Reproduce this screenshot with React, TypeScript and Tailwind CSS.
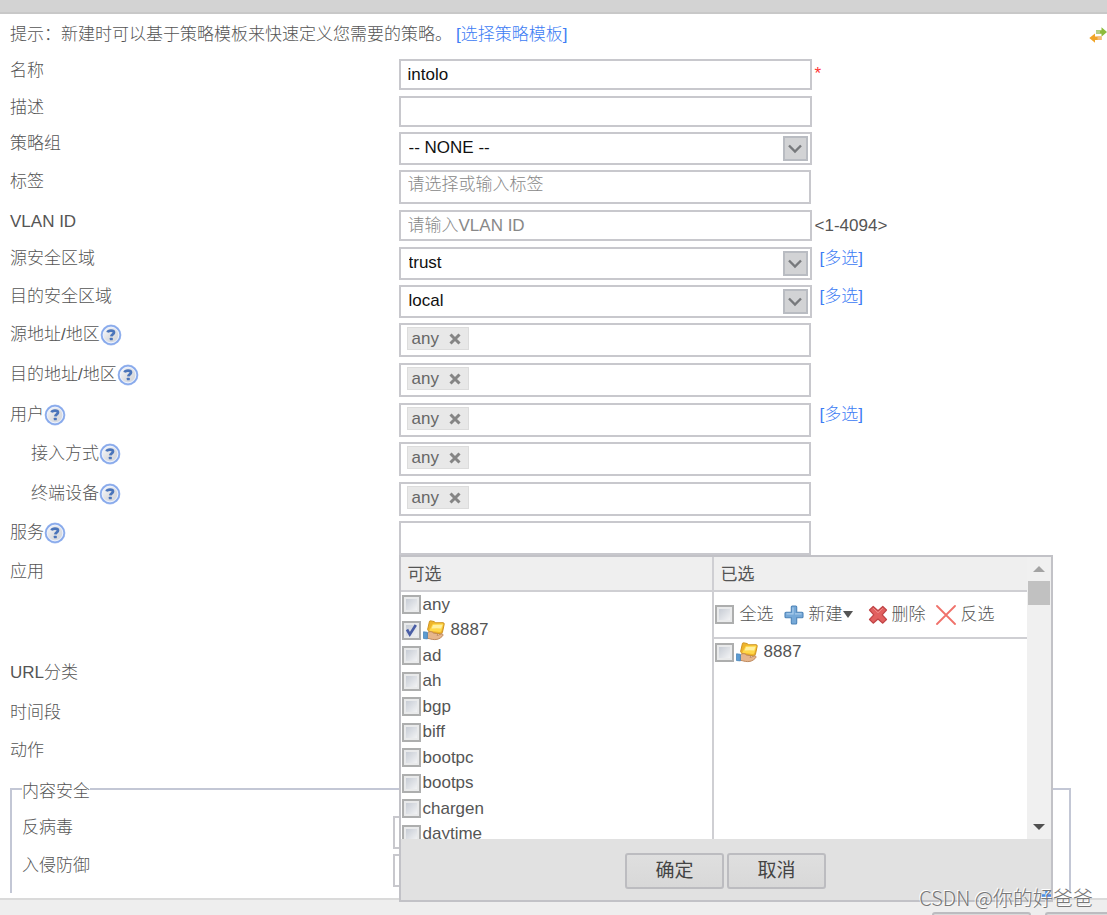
import React, { useId, useState } from "react";

const fieldBox =
  "border-2 border-[#c8c8cd] bg-white text-[17px] leading-6 text-[#111] outline-none placeholder:text-[#888] placeholder:opacity-100";

function HelpIcon() {
  return (
    <svg viewBox="0 0 22 22" className="size-[22px] shrink-0" aria-hidden="true">
      <defs>
        <linearGradient id="helpFill" x1="0" y1="0" x2="1" y2="1">
          <stop offset="0" stopColor="#fbfbfc" />
          <stop offset="0.5" stopColor="#dfe0e3" />
          <stop offset="1" stopColor="#d3d5da" />
        </linearGradient>
      </defs>
      <circle cx="11" cy="11" r="10.4" fill="#a4bff3" />
      <circle cx="11" cy="11" r="9.300" fill="none" stroke="#88a9ea" strokeWidth="1.300" />
      <circle cx="11" cy="11" r="7.800" fill="url(#helpFill)" stroke="#eef3fd" strokeWidth="1" />
      <path
        d="M7.600 8.400C8 7 9.400 6.700 11 6.700c1.900 0 3 .6 3 1.900 0 1.700-2.500 1.700-2.700 3.700"
        fill="none"
        stroke="#4a74ba"
        strokeWidth="2.700"
      />
      <rect x="9.800" y="13.700" width="3" height="2.600" rx="0.600" fill="#4a74ba" />
    </svg>
  );
}

function FolderHandIcon() {
  return (
    <svg viewBox="0 0 22 21" className="h-[21px] w-[22px] shrink-0" aria-hidden="true">
      <path d="M6.500 1.200Q7 .7 8 .9l3.300.7 1.200 1.200 7.500-.1q1.500.2 1.200 1.500L19.500 12q-.4 1.700-2 1.700L7 13 4.600 9.600z" fill="#efb52b" stroke="#cf9422" strokeWidth="1" />
      <path d="M9.300 4.700q.3-1 1.400-1l8.600-.2q1.300.1 1 1.300l-1.900 6q-.5 1.500-1.900 1.300L6.200 10.800z" fill="#ffd84a" />
      <path d="M10 5l9.500-.3-1.400 3.800q-4-.3-9.500 0z" fill="#fff0a0" />
      <path d="M4.500 13c2-2 4.500-1.600 6 0l3 .4c1.500.2 1.500 1.500.4 1.900 2.300-.2 4.200-1.700 5.300-1.400 1.300.3.900 1.700 0 2.500-2 2-4.400 3.200-7.400 3.200-3.200 0-4.900-1-7.300-1.200z" fill="#e6b68c" stroke="#b88155" strokeWidth="0.900" />
      <path d="M.5 11.800l3.900.5v6.600l-3.900-.4z" fill="#5b9bd2" stroke="#4a86bb" strokeWidth="0.800" />
    </svg>
  );
}

function PlusIcon() {
  return (
    <svg viewBox="0 0 20 20" className="size-5 shrink-0" aria-hidden="true">
      <path
        d="M8.300 1h3.400q1 0 1 1v5.300H18q1 0 1 1v3.400q0 1-1 1h-5.300V18q0 1-1 1H8.300q-1 0-1-1v-5.300H2q-1 0-1-1V8.300q0-1 1-1h5.300V2q0-1 1-1z"
        fill="#76a9d8"
        stroke="#4d84b8"
        strokeWidth="1.100"
      />
      <path d="M9 2.500v6.300H2.500M11 8.800h6.500" fill="none" stroke="#a9cbea" strokeWidth="1.200" />
    </svg>
  );
}

function DeleteIcon() {
  return (
    <svg viewBox="0 0 20 20" className="size-5 shrink-0" aria-hidden="true">
      <path
        d="M5.200 1.500L10 5.800l4.800-4.300L18.500 5 14.200 9.800l4.300 4.700-3.700 3.700L10 14l-4.800 4.200-3.700-3.700 4.300-4.700L1.500 5z"
        fill="#e2605f"
        stroke="#c04446"
        strokeWidth="1.200"
        strokeLinejoin="round"
      />
      <path d="M5.200 3.300L10 7.700l4.800-4.400" fill="none" stroke="#f08f8d" strokeWidth="1" />
    </svg>
  );
}

function InvertIcon() {
  return (
    <svg viewBox="0 0 20 20" className="size-5 shrink-0" aria-hidden="true">
      <path d="M1 1l18 18M19 1L1 19" stroke="#f0716a" strokeWidth="1.800" strokeLinecap="round" />
    </svg>
  );
}

function SwapIcon() {
  return (
    <svg viewBox="0 0 18 16" className="h-4 w-[18px]" aria-hidden="true">
      <path d="M7 3.300h5.500V.3L18 5l-5.500 4.700V6.800H7z" fill="#8dbb3c" />
      <path d="M7 3.300h4v3.500H7z" fill="#b5cf8b" />
      <path d="M12.500 9.400H6V6.600L.3 11 6 15.700v-2.800h6.500z" fill="#f0a427" />
      <path d="M8.500 9.400h4v3.500h-4z" fill="#f2bf7c" />
    </svg>
  );
}

function CheckBox({ label, defaultChecked = false, children }: {
  label: string;
  defaultChecked?: boolean;
  children?: React.ReactNode;
}) {
  return (
    <label className="flex items-center">
      <span className="relative size-[19px] shrink-0">
        <input
          type="checkbox"
          aria-label={label}
          defaultChecked={defaultChecked}
          className="peer block size-[19px] appearance-none border-2 border-[#adaeae] bg-linear-to-br from-[#bfc5cf] to-[#fafafa] shadow-[inset_0_0_0_2px_#e9eaeb]"
        />
        <svg viewBox="0 0 19 19" className="pointer-events-none absolute inset-0 hidden size-[19px] peer-checked:block" aria-hidden="true">
          <path d="M5 8.500l2.800 5L13.800 4" fill="none" stroke="#4a5ea6" strokeWidth="2.600" />
        </svg>
      </span>
      {children}
    </label>
  );
}

function AppEntry({ name, custom, checked }: { name: string; custom?: boolean; checked?: boolean }) {
  return (
    <CheckBox label={name} defaultChecked={checked}>
      {custom && (
        <span className="pr-1 pl-[2px]">
          <FolderHandIcon />
        </span>
      )}
      <span className="pl-[2px] leading-6">{name}</span>
    </CheckBox>
  );
}

function Row({ label, height, help, indent, extra, children, htmlFor }: {
  label: string;
  height: string;
  help?: boolean;
  indent?: boolean;
  extra?: React.ReactNode;
  children?: React.ReactNode;
  htmlFor?: string;
}) {
  return (
    <div className={`grid grid-cols-[36%_1fr] items-start pt-px ${height}`}>
      <div className={`flex h-6 items-center ${indent ? "pl-[31px]" : "pl-[10px]"}`}>
        <label htmlFor={htmlFor}>{label}</label>
        {help && <HelpIcon />}
      </div>
      <div className="relative flex items-start">
        {children}
        {extra}
      </div>
    </div>
  );
}

function SelectField({ id, value }: { id: string; value: string }) {
  return (
    <div className="relative w-[413px]">
      <select id={id} className={`${fieldBox} block h-[33px] w-full appearance-none px-2 pb-[2px]`}>
        <option>{value}</option>
      </select>
      <span className="pointer-events-none absolute top-1 right-1 flex size-[25px] items-center justify-center border-2 border-[#b9bcc2] bg-[#d2d3d5]">
        <svg viewBox="0 0 14 10" className="h-[10px] w-[14px]" aria-hidden="true">
          <path d="M1 1.500l6 6 6-6" fill="none" stroke="#77797c" strokeWidth="2.400" />
        </svg>
      </span>
    </div>
  );
}

function TagField({ id, tag }: { id: string; tag?: string }) {
  const [shown, setShown] = useState(Boolean(tag));
  return (
    <div className="mr-px flex h-[34px] w-[412px] items-start border-2 border-[#c8c8cd] bg-white px-[6px] pt-[2px]">
      {shown && (
        <span className="flex h-[23px] shrink-0 items-center gap-[10px] border border-[#dcdcdc] bg-[#e8e8e8] pr-[7px] pl-1 text-[#666]">
          {tag}
          <button type="button" aria-label="x" onClick={() => setShown(false)}>
            <svg viewBox="0 0 12 12" className="size-3" aria-hidden="true">
              <path d="M1.500 1.500l9 9M10.500 1.500l-9 9" stroke="#858585" strokeWidth="3" />
            </svg>
          </button>
        </span>
      )}
      <input id={id} className="min-w-0 flex-1 outline-none" />
    </div>
  );
}

function MultiLink() {
  return (
    <a href="#multi" className="ml-2 text-[#3d7cf4]">
      [多选]
    </a>
  );
}

const apps = ["any", "8887", "ad", "ah", "bgp", "biff", "bootpc", "bootps", "chargen", "daytime"];

function AppPicker() {
  return (
    <div
      role="dialog"
      aria-label="应用"
      className="absolute top-[34px] left-0 z-10 w-[654px] border-2 border-[#c2c2c7] bg-white font-normal text-[#555]"
    >
      <div className="flex h-[282px]">
        <section className="flex w-[313px] flex-col border-r-2 border-[#cfcfd3]">
          <h2 className="h-[35px] shrink-0 border-b-2 border-[#cfcfd3] bg-[#efefef] px-[7px] leading-9">可选</h2>
          <div className="flex-1 overflow-hidden">
            <ul className="grid h-[255px] grid-rows-10 pl-px">
              {apps.map((name) => (
                <li key={name} className="flex items-center">
                  <AppEntry name={name} custom={name === "8887"} checked={name === "8887"} />
                </li>
              ))}
            </ul>
          </div>
        </section>
        <section className="flex min-w-0 flex-1 flex-col">
          <h2 className="h-[35px] shrink-0 border-b-2 border-[#cfcfd3] bg-[#efefef] px-[7px] leading-9">已选</h2>
          <div className="flex h-[47px] shrink-0 items-center border-b-2 border-[#cfcfd3] pl-px font-light text-[#555]">
            <CheckBox label="全选">
              <span className="pl-[6px]">全选</span>
            </CheckBox>
            <button type="button" className="ml-[10px] flex items-center gap-[5px]">
              <PlusIcon />
              <span className="flex items-center">
                新建
                <svg viewBox="0 0 10 7" className="h-[7px] w-[10px]" aria-hidden="true">
                  <path d="M0 0h10L5 7z" fill="#555" />
                </svg>
              </span>
            </button>
            <button type="button" className="ml-[15px] flex items-center gap-1">
              <DeleteIcon />
              删除
            </button>
            <button type="button" className="ml-[10px] flex items-center gap-[5px]">
              <InvertIcon />
              反选
            </button>
          </div>
          <div className="flex h-[26px] items-center pl-px">
            <AppEntry name="8887" custom />
          </div>
        </section>
        <div className="flex w-6 flex-col items-center bg-[#f0f0f0]">
          <svg viewBox="0 0 12 6" className="mt-[9px] h-[6px] w-3" aria-hidden="true">
            <path d="M0 6h12L6 0z" fill="#a3a3a3" />
          </svg>
          <span className="mt-[9px] h-6 w-[22px] bg-[#c1c1c1]" />
          <svg viewBox="0 0 12 6" className="mt-auto mb-[9px] h-[6px] w-3" aria-hidden="true">
            <path d="M0 0h12L6 6z" fill="#505050" />
          </svg>
        </div>
      </div>
      <div className="relative flex h-[61px] items-center justify-center gap-[3px] bg-[#e1e1e1] pt-[3px] text-[19px]">
        {["确定", "取消"].map((text) => (
          <button
            key={text}
            type="button"
            className="h-9 w-[99px] rounded-[3px] border-2 border-[#bcbcc0] bg-linear-to-b from-[#dfdfdf] to-[#d8d8d8] leading-8 text-[#444]"
          >
            {text}
          </button>
        ))}
        <svg viewBox="0 0 9 9" className="absolute right-0 bottom-0 size-[9px]" aria-hidden="true">
          <path d="M0 4.500h9M4.500 0v9" stroke="#4b8be8" strokeWidth="2.500" />
        </svg>
      </div>
    </div>
  );
}

export default function App() {
  const base = useId();
  const id = (name: string) => `${base}-${name}`;
  return (
    <div className="flex h-screen flex-col overflow-hidden bg-white font-['Liberation_Sans','Noto_Sans_CJK_SC',sans-serif] text-[17px] leading-6 font-light text-[#555]">
      <header className="h-[14px] shrink-0 border-b-2 border-[#c8c8c8] bg-[#d3d3d3]" />
      <main className="shrink-0">
        <div className="flex h-11 items-start justify-between pt-[9px] pl-[10px]">
          <p>
            提示：新建时可以基于策略模板来快速定义您需要的策略。
            <a href="#template" className="ml-1 text-[#3d7cf4]">
              [选择策略模板]
            </a>
          </p>
          <button type="button" aria-label="切换" className="pt-1">
            <SwapIcon />
          </button>
        </div>
        <form>
          <Row label="名称" height="h-[37px]" htmlFor={id("name")} extra={<span className="ml-[3px] pt-[3px] text-[#f33]">*</span>}>
            <input id={id("name")} defaultValue="intolo" className={`${fieldBox} h-[31px] w-[413px] px-[7px]`} />
          </Row>
          <Row label="描述" height="h-9" htmlFor={id("desc")}>
            <input id={id("desc")} className={`${fieldBox} h-[31px] w-[413px] px-[7px]`} />
          </Row>
          <Row label="策略组" height="h-[38px]" htmlFor={id("group")}>
            <SelectField id={id("group")} value="-- NONE --" />
          </Row>
          <Row label="标签" height="h-10" htmlFor={id("tag")}>
            <input id={id("tag")} placeholder="请选择或输入标签" className={`${fieldBox} h-[34px] w-[412px] px-[7px] pb-1`} />
          </Row>
          <Row label="VLAN ID" height="h-[37px]" htmlFor={id("vlan")} extra={<span className="ml-[3px] pt-1">&lt;1-4094&gt;</span>}>
            <input id={id("vlan")} placeholder="请输入VLAN ID" className={`${fieldBox} h-[31px] w-[413px] px-[7px]`} />
          </Row>
          <Row label="源安全区域" height="h-[38px]" htmlFor={id("srczone")} extra={<MultiLink />}>
            <SelectField id={id("srczone")} value="trust" />
          </Row>
          <Row label="目的安全区域" height="h-[38px]" htmlFor={id("dstzone")} extra={<MultiLink />}>
            <SelectField id={id("dstzone")} value="local" />
          </Row>
          <Row label="源地址/地区" height="h-10" help htmlFor={id("src")}>
            <TagField id={id("src")} tag="any" />
          </Row>
          <Row label="目的地址/地区" height="h-10" help htmlFor={id("dst")}>
            <TagField id={id("dst")} tag="any" />
          </Row>
          <Row label="用户" height="h-[39px]" help htmlFor={id("user")} extra={<MultiLink />}>
            <TagField id={id("user")} tag="any" />
          </Row>
          <Row label="接入方式" height="h-10" help indent htmlFor={id("access")}>
            <TagField id={id("access")} tag="any" />
          </Row>
          <Row label="终端设备" height="h-[39px]" help indent htmlFor={id("device")}>
            <TagField id={id("device")} tag="any" />
          </Row>
          <Row label="服务" height="h-[39px]" help htmlFor={id("service")} extra={<AppPicker />}>
            <TagField id={id("service")} />
          </Row>
          <Row label="应用" height="h-[101px]" />
          <Row label="URL分类" height="h-10" />
          <Row label="时间段" height="h-[38px]" />
          <Row label="动作" height="h-10" />
          <fieldset className="mr-9 ml-[10px] border-2 border-b-0 border-[#c3c7d5] pt-[15px]">
            <legend className="ml-[10px] h-[22px] leading-7">内容安全</legend>
            <Row label="反病毒" height="h-[38px]" htmlFor={id("av")}>
              <SelectField id={id("av")} value="-- NONE --" />
            </Row>
            <Row label="入侵防御" height="h-10" htmlFor={id("ips")}>
              <SelectField id={id("ips")} value="-- NONE --" />
            </Row>
          </fieldset>
        </form>
      </main>
      <footer className="relative mt-[5px] flex min-h-0 flex-1 items-start justify-end gap-[14px] border-t-2 border-[#dadada] bg-[#eee] pt-3">
        <button type="button" aria-label="确定" className="h-9 w-[99px] shrink-0 rounded-[3px] border-2 border-[#bcbcc0] bg-[#dadada]" />
        <button type="button" aria-label="取消" className="h-9 w-[62px] shrink-0 rounded-l-[3px] border-2 border-r-0 border-[#bcbcc0] bg-[#dadada]" />
        <span className="absolute -top-4 right-[14px] z-20 font-['Noto_Sans_CJK_SC',sans-serif] text-[20px] leading-7 whitespace-nowrap text-[#777] [text-shadow:-1px_-1px_0_#fff]">
          CSDN @你的好爸爸
        </span>
      </footer>
    </div>
  );
}
